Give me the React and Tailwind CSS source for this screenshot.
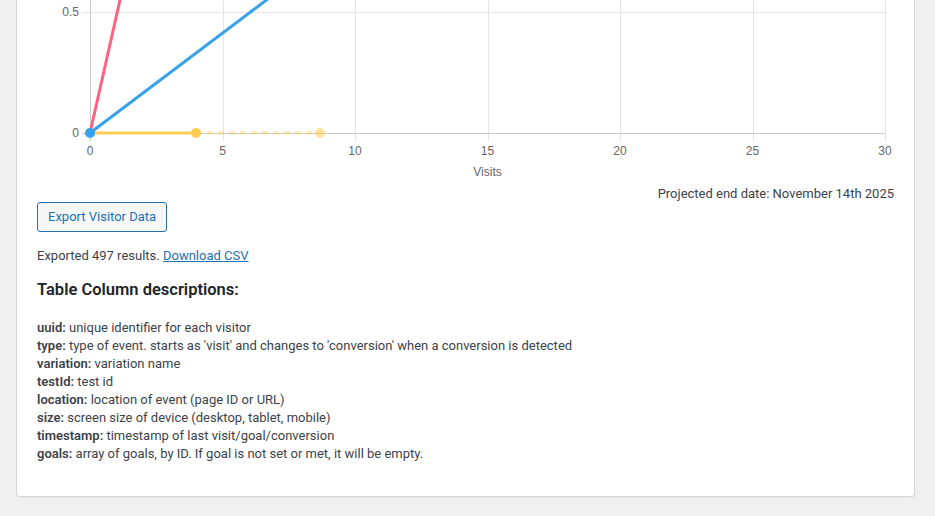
import React from "react";

const xTicks = [0, 5, 10, 15, 20, 25, 30];
const X0 = 90;
const XW = 26.5;

const descriptions = [
  ["uuid", "unique identifier for each visitor"],
  ["type", "type of event. starts as 'visit' and changes to 'conversion' when a conversion is detected"],
  ["variation", "variation name"],
  ["testId", "test id"],
  ["location", "location of event (page ID or URL)"],
  ["size", "screen size of device (desktop, tablet, mobile)"],
  ["timestamp", "timestamp of last visit/goal/conversion"],
  ["goals", "array of goals, by ID. If goal is not set or met, it will be empty."],
];

const VisitsChart = () => {
  return (
    <svg
      width="858"
      height="182"
      viewBox="37 0 858 182"
      className="block"
      style={{ fontFamily: "'Liberation Sans', Arial, sans-serif" }}
    >
      {/* grid */}
      <line x1="82" y1="12.5" x2="885" y2="12.5" stroke="#e4e4e4" strokeWidth="1" />
      {xTicks.map((t) => {
        const x = Math.round(X0 + t * XW) + 0.5;
        return (
          <line
            key={t}
            x1={x}
            y1="0"
            x2={x}
            y2="141"
            stroke={t === 0 ? "#c9c9c9" : "#e4e4e4"}
            strokeWidth="1"
          />
        );
      })}
      <line x1="82" y1="133.5" x2="885" y2="133.5" stroke="#c9c9c9" strokeWidth="1" />

      {/* y labels */}
      <text x="79" y="16" textAnchor="end" fontSize="12" fill="#666">0.5</text>
      <text x="79" y="137" textAnchor="end" fontSize="12" fill="#666">0</text>

      {/* x labels */}
      {xTicks.map((t) => (
        <text key={t} x={X0 + t * XW} y="155" textAnchor="middle" fontSize="12" fill="#666">
          {t}
        </text>
      ))}
      <text x="487.5" y="176" textAnchor="middle" fontSize="12" fill="#666">Visits</text>

      {/* series */}
      <line x1="90" y1="133" x2="124.5" y2="-20" stroke="#ff6384" strokeWidth="3" />
      <line x1="90" y1="133" x2="293" y2="-20" stroke="#36a2eb" strokeWidth="3" />
      <line x1="196" y1="133" x2="320" y2="133" stroke="#ffcd56" strokeOpacity="0.5" strokeWidth="3" strokeDasharray="6 5" />
      <line x1="90" y1="133" x2="196" y2="133" stroke="#ffcd56" strokeWidth="3" />
      <circle cx="320" cy="133" r="5" fill="#ffcd56" fillOpacity="0.55" />
      <circle cx="196" cy="133" r="5" fill="#ffcd56" />
      <circle cx="90" cy="133" r="5" fill="#36a2eb" />
    </svg>
  );
};

export default function App() {
  return (
    <div
      className="h-[516px] w-[935px] overflow-hidden bg-[#f0f0f1] pl-4 pr-5 text-[13px] leading-[18px] text-[#3c434a]"
      style={{ fontFamily: "Roboto, 'Liberation Sans', sans-serif" }}
    >
      <div className="rounded-b border border-t-0 border-[#d6d6d8] bg-white px-5 pb-[33px] shadow-[0_1px_1px_rgba(0,0,0,0.04)]">
        <VisitsChart />
        <p className="mt-[3px] text-right">Projected end date: November 14th 2025</p>
        <button className="-mt-px h-[30px] rounded-[3px] border border-[#2271b1] bg-[#f6f7f7] px-[10px] text-[13px] text-[#2271b1]">
          Export Visitor Data
        </button>
        <p className="mt-[15px]">
          Exported 497 results.{" "}
          <a href="#" className="text-[#2271b1] underline">
            Download CSV
          </a>
        </p>
        <h3 className="mt-[14px] text-[16.5px] font-semibold leading-[22px] text-[#1d2327]">
          Table Column descriptions:
        </h3>
        <div className="mt-[18px]">
          {descriptions.map(([k, v]) => (
            <div key={k}>
              <span className="font-semibold">{k}:</span> {v}
            </div>
          ))}
        </div>
      </div>
    </div>
  );
}
